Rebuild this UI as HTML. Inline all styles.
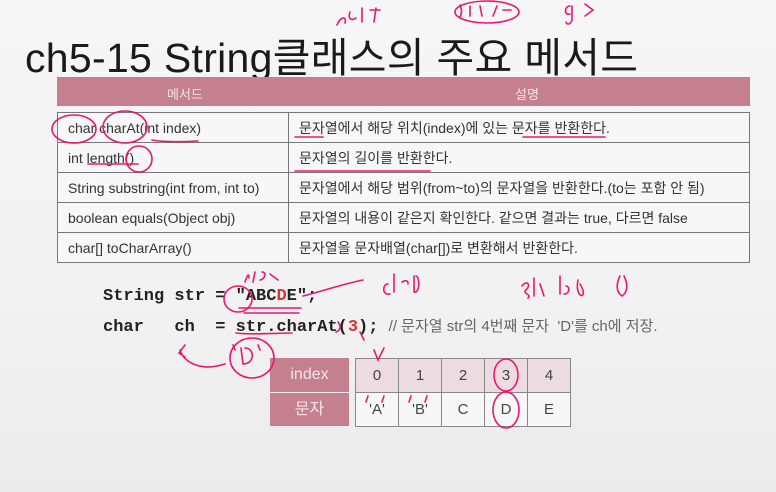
<!DOCTYPE html>
<html><head><meta charset="utf-8"><style>
*{margin:0;padding:0;box-sizing:border-box}
body{width:776px;height:492px;overflow:hidden;position:relative;background:linear-gradient(#f6f6f6,#f2f2f2 60%,#ebebeb);font-family:"Liberation Sans","Noto Sans CJK KR",sans-serif;color:#333}
.a{position:absolute}
h1{position:absolute;left:25px;top:24px;font-size:41px;font-weight:normal;color:#1a1a1a;letter-spacing:0.3px;white-space:nowrap}
table{border-collapse:collapse;position:absolute}
#t td{border:1.5px solid #777;height:30px;font-size:14px;padding-left:10px;color:#333;background:#f7f7f7}
#hd{position:absolute;left:57px;top:77px;width:693px;height:29px;background:#c4808f;color:#f3e3e8;font-size:13px}
#hd div{position:absolute;top:7px}
.code{position:absolute;left:103px;font-family:"Liberation Mono","Noto Sans CJK KR",monospace;font-weight:bold;font-size:17px;color:#222;white-space:pre}
#ix td{border:1.5px solid #888;width:43px;height:34px;text-align:center;font-size:15px;color:#444}
.lab{position:absolute;left:270px;width:79px;background:#c4808f;color:#f5e6ea;font-size:16px;text-align:center}
</style></head><body>
<h1>ch5-15 String클래스의 주요 메서드</h1>
<div id="hd"><div style="left:110px">메서드</div><div style="left:458px">설명</div></div>
<table id="t" style="left:57px;top:112px;width:693px">
<tr><td style="width:231px">char charAt(int index)</td><td>문자열에서 해당 위치(index)에 있는 문자를 반환한다.</td></tr>
<tr><td>int length()</td><td>문자열의 길이를 반환한다.</td></tr>
<tr><td>String substring(int from, int to)</td><td>문자열에서 해당 범위(from~to)의 문자열을 반환한다.(to는 포함 안 됨)</td></tr>
<tr><td>boolean equals(Object obj)</td><td>문자열의 내용이 같은지 확인한다. 같으면 결과는 true, 다르면 false</td></tr>
<tr><td>char[] toCharArray()</td><td>문자열을 문자배열(char[])로 변환해서 반환한다.</td></tr>
</table>
<div class="code" style="top:287px">String str = "ABC<span style="color:#d33">D</span>E";</div>
<div class="code" style="top:315px">char   ch  = str.charAt(<span style="color:#d33">3</span>); <span style="font-weight:normal;color:#666;font-family:'Liberation Sans','Noto Sans CJK KR',sans-serif;font-size:15px">// 문자열 str의 4번째 문자  'D'를 ch에 저장.</span></div>
<div class="lab" style="top:358px;height:34px;line-height:34px">index</div>
<div class="lab" style="top:393px;height:33px;line-height:33px">문자</div>
<table id="ix" style="left:355px;top:358px">
<tr style="background:#ecdbe0"><td>0</td><td>1</td><td>2</td><td>3</td><td>4</td></tr>
<tr style="background:#f7f7f7"><td>'A'</td><td>'B'</td><td>C</td><td>D</td><td>E</td></tr>
</table>
<svg class="a" style="left:0;top:0" width="776" height="492" fill="none" stroke="#e8186f" stroke-width="1.6" stroke-linecap="round">
<path d="M337 25c3-8 10-10 8-2M350 12c-2 5 0 10 6 6M362 8v14M376 8l-2 14M370 10h10"/>
<ellipse cx="487" cy="12" rx="32" ry="11"/>
<path d="M460 5c2 5 2 8 0 12M470 6v10M480 6l2 10M497 6l-4 10M503 10h8"/>
<path d="M570 6c-6 0-6 10 0 8M572 6v14c-2 6-6 4-6 2M585 4l8 6-8 6"/>
<ellipse cx="74" cy="129" rx="22" ry="14"/>
<ellipse cx="125" cy="127" rx="22" ry="16"/>
<path d="M152 140c10 2 30 2 46 1"/>
<path d="M88 164h50"/><ellipse cx="139" cy="159" rx="13" ry="13"/>
<path d="M295 137h28M523 137h82M295 171h135"/>
<ellipse cx="238" cy="299" rx="14" ry="13"/>
<path d="M239 308h62M244 313h55M303 296c20-5 40-12 60-16"/>
<path d="M245 282c2-6 4-10 4-4M255 272l-2 10M262 272c6 0 2 8 -2 8M270 274l8 6"/>
<path d="M388 284c-6 0-6 12 2 10M394 274v18M402 282c4-2 6-2 6 2M414 276v16M416 276c4 0 4 18-2 16"/>
<path d="M522 286c4-6 10-2 4 4-4 4 6 4 2 8M534 278v18M540 284l4 12M560 276v18M566 286c4 0 4 8-2 8M578 280c-4 20 12 20 2 4M620 276c-4 8-4 16 2 20M624 276c4 8 4 16-2 20"/>
<ellipse cx="252" cy="358" rx="22" ry="20"/>
<path d="M241 348l2 16M245 348c10 0 10 16-2 16M233 345l2 5M258 345l2 5"/>
<path d="M185 345l-6 8 6 4M180 350c4 12 20 22 45 14"/>
<path d="M236 333c14 2 40 0 56 0M360 332l4 8M338 322c3 4 3 8-2 10"/>
<path d="M374 350l4 10 6-12"/>
<ellipse cx="506" cy="375" rx="12" ry="16"/>
<ellipse cx="506" cy="410" rx="13" ry="18"/>
<path d="M366 402l2-6M382 402l2-6M409 402l2-6M425 402l2-6"/>
</svg>
</body></html>
